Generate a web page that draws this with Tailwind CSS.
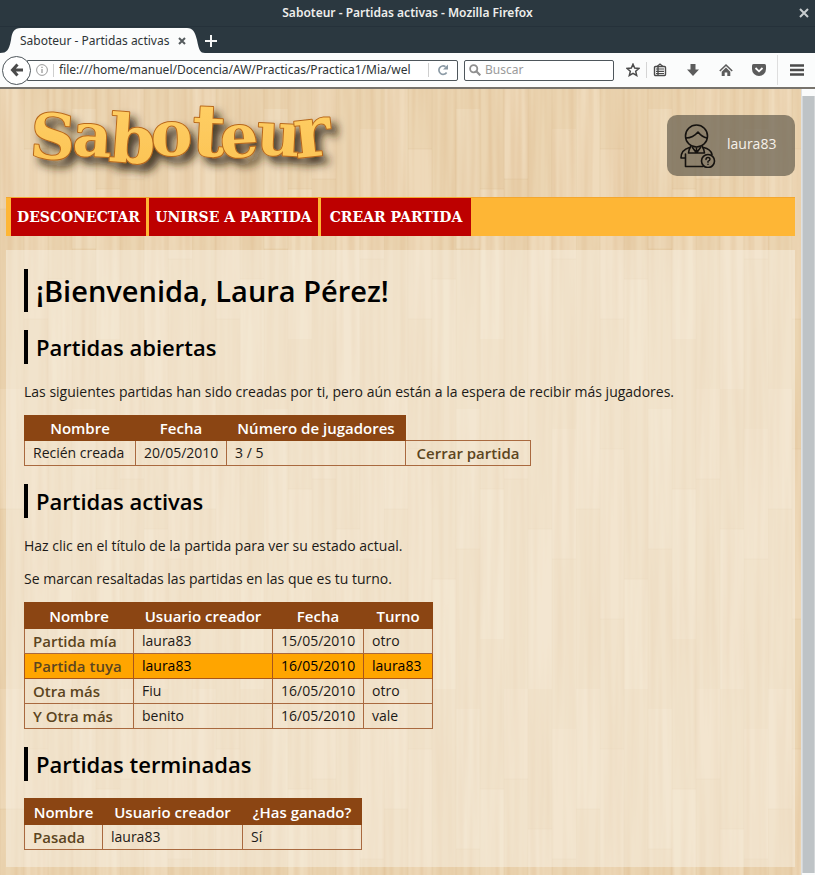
<!DOCTYPE html>
<html lang="es">
<head>
<meta charset="utf-8">
<title>Saboteur - Partidas activas</title>
<script src="https://cdn.jsdelivr.net/npm/@tailwindcss/browser@4"></script>
</head>
<body class="flex min-h-screen flex-col bg-[#fbfcfc] font-['Open_Sans',sans-serif] text-[14px] leading-[22px] text-[#1c1a17]">

<!-- Browser window -->
<div class="font-['Noto_Sans',sans-serif] text-[12px] leading-5 text-[#2e3436]">
  <div class="flex h-[26px] items-center bg-[#2b3840] px-[3px] text-[#eeeeec]">
    <span class="w-4"></span>
    <span class="flex-1 text-center font-semibold">Saboteur - Partidas activas - Mozilla Firefox</span>
    <button type="button" aria-label="Cerrar ventana" class="flex w-4 justify-center">
      <svg class="size-[10px]" viewBox="0 0 10 10" fill="none" stroke="#c9cdcf" stroke-width="2"><path d="M1 1l8 8M9 1l-8 8"/></svg>
    </button>
  </div>
  <div class="flex h-[27px] items-end border-t border-[#25313a] bg-[#2b3840]">
    <div class="relative flex h-[25px] w-[205px] items-center">
      <svg class="absolute inset-0 size-full" viewBox="0 0 205 25" preserveAspectRatio="none"><path d="M0 25C7 25 9 22 11 12C12 4 14 0 21 0H187C193 0 195 4 197 12C199 22 200 25 205 25Z" fill="#fbfcfc"/></svg>
      <span class="relative ml-5 w-[150px] whitespace-nowrap">Saboteur - Partidas activas</span>
      <button type="button" aria-label="Cerrar pestaña" class="relative ml-2">
        <svg class="size-[8px]" viewBox="0 0 8 8" fill="none" stroke="#555b5e" stroke-width="2"><path d="M1 1l6 6M7 1l-6 6"/></svg>
      </button>
    </div>
    <button type="button" aria-label="Nueva pestaña" class="mb-[6px]">
      <svg class="size-[12px]" viewBox="0 0 12 12" fill="none" stroke="#f4f5f5" stroke-width="2"><path d="M6 0v12M0 6h12"/></svg>
    </button>
  </div>
  <div class="flex h-[36px] items-center border-b-2 border-[#77736c] bg-[#fbfcfc] pr-[11px] pl-[2px]">
    <button type="button" aria-label="Atrás" class="relative z-10 flex size-[29px] shrink-0 items-center justify-center rounded-full border border-[#4e565b] bg-white">
      <svg class="size-[14px]" viewBox="0 0 14 14" fill="none" stroke="#4b4b4b" stroke-width="3"><path d="M7.500 1.500L2.500 7l5 5.500M2.500 7H13"/></svg>
    </button>
    <div class="-ml-1 flex h-[21px] flex-1 items-center rounded-r-[2px] border border-[#4e565b] bg-white pl-2">
      <svg class="size-[12px] shrink-0" viewBox="0 0 12 12" fill="none" stroke="#9a9a9a"><circle cx="6" cy="6" r="5.400"/><path d="M6 5v4M6 2.700v1.300" stroke-width="1.300"/></svg>
      <span class="ml-[5px] h-[13px] w-px bg-[#cfcfcf]"></span>
      <input aria-label="Dirección" class="ml-[5px] min-w-0 flex-1 outline-none" value="file:///home/manuel/Docencia/AW/Practicas/Practica1/Mia/wel">
      <span class="h-[14px] w-px bg-[#cfcfcf]"></span>
      <button type="button" aria-label="Recargar" class="mx-2">
        <svg class="size-[12px]" viewBox="0 0 12 12"><path d="M9.600 8.500A4.200 4.200 0 1 1 8.500 2.700" fill="none" stroke="#8b9aa5" stroke-width="1.700"/><path d="M11 .5v5H6z" fill="#8b9aa5"/></svg>
      </button>
    </div>
    <label class="ml-[6px] flex h-[21px] w-[150px] items-center rounded-[2px] border border-[#4e565b] bg-white pl-1">
      <svg class="size-[12px] shrink-0" viewBox="0 0 12 12" fill="none" stroke="#8f8f8f" stroke-width="1.800"><circle cx="4.700" cy="4.700" r="3.600"/><path d="M7.300 7.300l4 4" stroke-width="2.200"/></svg>
      <input aria-label="Buscar" placeholder="Buscar" class="ml-1 w-full min-w-0 outline-none placeholder:text-[#9b9b9b]">
    </label>
    <div class="ml-3 flex items-center text-[#4b4b4b]">
      <button type="button" aria-label="Marcador"><svg class="size-[14px]" viewBox="0 0 14 14" fill="none" stroke="currentColor" stroke-width="1.500"><path d="M7 1.200l1.700 3.900 4.200.4-3.200 2.800 1 4.200L7 10.300l-3.700 2.200 1-4.200L1.100 5.500l4.200-.4z"/></svg></button>
      <span class="mx-[6px] h-[16px] w-px bg-[#d5d5d5]"></span>
      <button type="button" aria-label="Biblioteca"><svg class="size-[14px]" viewBox="0 0 14 14" fill="none" stroke="currentColor" stroke-width="1.400"><rect x="1.500" y="3.500" width="11" height="9" rx="1"/><path d="M4 3.500L7 1l3 2.500M3 6h8M3 8.300h8M3 10.500h8" stroke-width="1.200"/><path d="M5 3.500v8.500"/></svg></button>
      <button type="button" aria-label="Descargas" class="ml-[19px]"><svg class="size-[14px]" viewBox="0 0 14 14" fill="#5c5c5c"><path d="M4.500 1h5v5.500H13L7 13 1 6.500h3.500z"/></svg></button>
      <button type="button" aria-label="Inicio" class="ml-[19px]"><svg class="size-[14px]" viewBox="0 0 14 14"><path d="M.8 8L7 2l6.200 6" fill="none" stroke="#5c5c5c" stroke-width="1.600"/><path d="M7 4.500L11.300 8.800V13H8.300V9.500H5.700V13H2.700V8.800z" fill="#5c5c5c"/></svg></button>
      <button type="button" aria-label="Pocket" class="ml-[19px]"><svg class="size-[14px]" viewBox="0 0 14 14"><path d="M1.500 1h11q1.500 0 1.500 1.500V6A7 7 0 0 1 0 6V2.500Q0 1 1.500 1z" fill="#5c5c5c"/><path d="M3.500 5L7 8.300 10.500 5" fill="none" stroke="#fff" stroke-width="1.800"/></svg></button>
      <span class="ml-[11px] h-[30px] w-px bg-[#dedede]"></span>
      <button type="button" aria-label="Menú" class="ml-[12px]"><svg class="size-[14px]" viewBox="0 0 14 14" fill="none" stroke="currentColor" stroke-width="2.400"><path d="M0 2.500h14M0 7h14M0 11.500h14"/></svg></button>
    </div>
  </div>
</div>

<div class="flex flex-1">
  <!-- Page -->
  <div class="relative flex-1 overflow-hidden bg-[#e9d1ae] px-[6px] pb-[7px]">
    <svg class="absolute inset-0 size-full" aria-hidden="true">
      <defs>
        <filter id="grain" x="0" y="0" width="100%" height="100%" color-interpolation-filters="sRGB">
          <feTurbulence type="fractalNoise" baseFrequency="0.16 0.005" numOctaves="2" seed="8"/>
          <feColorMatrix values="0 0 0 0 0.85  0 0 0 0 0.69  0 0 0 0 0.5  0.700 0 0 0 -0.240"/>
        </filter>
        <pattern id="planks" width="192" height="300" patternUnits="userSpaceOnUse">
          <g fill="#fff6e4">
            <rect x="0" y="0" width="24" height="120" opacity=".2"/><rect x="24" y="60" width="24" height="170" opacity=".16"/>
            <rect x="48" y="190" width="24" height="110" opacity=".22"/><rect x="72" y="20" width="24" height="140" opacity=".18"/>
            <rect x="96" y="100" width="24" height="150" opacity=".22"/><rect x="120" y="0" width="24" height="90" opacity=".16"/>
            <rect x="144" y="140" width="24" height="160" opacity=".2"/><rect x="168" y="40" width="24" height="130" opacity=".16"/>
            <rect width="192" height="300" opacity=".08"/>
          </g>
          <path d="M0 0v300M24 0v300M48 0v300M72 0v300M96 0v300M120 0v300M144 0v300M168 0v300M0 120h24M24 60h24M24 230h24M48 190h24M72 160h24M96 100h24M120 90h24M144 140h24M168 170h24" stroke="#d2b184" stroke-opacity=".2" fill="none"/>
        </pattern>
      </defs>
      <rect width="100%" height="100%" fill="url(#planks)"/>
      <rect width="100%" height="100%" filter="url(#grain)"/>
    </svg>

    <div class="relative">
      <header class="flex h-[108px] items-start justify-between">
        <svg class="ml-5 h-[96px] w-[330px]" viewBox="26 89 330 96" role="img" aria-label="Saboteur">
          <defs>
            <linearGradient id="gold" x1="0" y1="0" x2="0" y2="1"><stop offset="0" stop-color="#ffd168"/><stop offset="1" stop-color="#fbc252"/></linearGradient>
            <filter id="shadow" x="-10%" y="-20%" width="125%" height="160%"><feDropShadow dx="6" dy="7" stdDeviation="4" flood-color="#2a1c0a" flood-opacity=".85"/></filter>
          </defs>
          <g filter="url(#shadow)" font-family="'DejaVu Serif', serif" font-weight="bold" fill="url(#gold)" stroke="#b8681b" stroke-width="2" stroke-linejoin="round" paint-order="stroke">
            <text><tspan x="29" y="157" font-size="62" rotate="4">S</tspan><tspan x="72" y="155" font-size="60" rotate="3">a</tspan><tspan x="108" y="161" font-size="66" rotate="4">b</tspan><tspan x="151" y="155" font-size="62">o</tspan><tspan x="191" y="155" font-size="72" rotate="3">t</tspan><tspan x="221" y="158" font-size="60" rotate="-3">e</tspan><tspan x="256" y="154" font-size="60" rotate="3">u</tspan><tspan x="296" y="158" font-size="70" rotate="-6">r</tspan></text>
          </g>
        </svg>
        <div class="mt-[26px] flex h-[61px] w-[128px] items-center rounded-[10px] bg-[#5b5447]/65 pl-[13px] text-[#f6f1ea]">
          <svg class="h-[44px] w-[36px]" viewBox="0 0 36 44" fill="none" stroke="#15120f" stroke-width="1.600" stroke-linecap="round" stroke-linejoin="round">
            <circle cx="16.500" cy="12" r="11"/><path d="M6 14q7 0 12-6 4 5 9 6"/>
            <path d="M11 22q-2 3-2.500 7h16q-.5-4-2.500-7M12.500 23.500l4 5.500 4-5.500M16.500 24v5"/>
            <path d="M9.500 23.500C4 25 1 28 1 34h4.500M23.500 23.500c5 1 7.500 3 8.500 7M5.500 30v12.500H23"/>
            <circle cx="28" cy="37" r="6.500"/>
            <path d="M26 35.500q0-2 2-2t2 1.800q0 1.200-2 2v1M28 40.300v.1" stroke-width="1.400"/>
          </svg>
          <span class="ml-[11px] pb-1">laura83</span>
        </div>
      </header>

      <nav class="flex h-[39px] gap-[3px] border-t border-[#f3a72f] bg-[#feb635] pl-[5px] font-['DejaVu_Serif',serif] font-bold text-white">
        <a href="#" class="flex w-[135px] items-center justify-center whitespace-nowrap bg-[#bd0000]">DESCONECTAR</a>
        <a href="#" class="flex w-[169px] items-center justify-center whitespace-nowrap bg-[#bd0000]">UNIRSE A PARTIDA</a>
        <a href="#" class="flex w-[150px] items-center justify-center whitespace-nowrap bg-[#bd0000]">CREAR PARTIDA</a>
      </nav>

      <main class="mt-[14px] bg-[#f8f1e5]/50 px-[18px] pt-[19px] pb-[17px]">
        <h1 class="mb-[18px] border-l-4 border-black pl-2 text-[29px] leading-[43px] font-semibold text-black">¡Bienvenida, Laura Pérez!</h1>

        <section class="mb-[18px]">
          <h2 class="mb-[17px] border-l-4 border-black pl-2 text-[22px] leading-[34px] font-semibold text-black">Partidas abiertas</h2>
          <p class="mb-3">Las siguientes partidas han sido creadas por ti, pero aún están a la espera de recibir más jugadores.</p>
          <table class="border-collapse whitespace-nowrap">
            <tr class="h-[25px] text-[15px] text-white">
              <th class="w-[111px] border border-[#8b4513] bg-[#8b4513] font-semibold">Nombre</th>
              <th class="w-[91px] border border-[#8b4513] bg-[#8b4513] font-semibold">Fecha</th>
              <th class="w-[179px] border border-[#8b4513] bg-[#8b4513] font-semibold">Número de jugadores</th>
            </tr>
            <tr class="h-[25px]">
              <td class="border border-[#a9693f] pl-2">Recién creada</td>
              <td class="border border-[#a9693f] pl-2">20/05/2010</td>
              <td class="border border-[#a9693f] pl-2">3 / 5</td>
              <td class="w-[125px] border border-[#a9693f] text-center text-[15px]"><a href="#" class="font-semibold text-[#5c4520]">Cerrar partida</a></td>
            </tr>
          </table>
        </section>

        <section class="mb-[18px]">
          <h2 class="mb-[17px] border-l-4 border-black pl-2 text-[22px] leading-[34px] font-semibold text-black">Partidas activas</h2>
          <p class="mb-[11px]">Haz clic en el título de la partida para ver su estado actual.</p>
          <p class="mb-3">Se marcan resaltadas las partidas en las que es tu turno.</p>
          <table class="border-collapse whitespace-nowrap">
            <tr class="h-[26px] text-[15px] text-white">
              <th class="w-[109px] border border-[#8b4513] bg-[#8b4513] font-semibold">Nombre</th>
              <th class="w-[139px] border border-[#8b4513] bg-[#8b4513] font-semibold">Usuario creador</th>
              <th class="w-[91px] border border-[#8b4513] bg-[#8b4513] font-semibold">Fecha</th>
              <th class="w-[69px] border border-[#8b4513] bg-[#8b4513] font-semibold">Turno</th>
            </tr>
            <tr class="h-[25px]">
              <td class="border border-[#a9693f] pl-2 text-[15px]"><a href="#" class="font-semibold text-[#5c4520]">Partida mía</a></td>
              <td class="border border-[#a9693f] pl-2">laura83</td><td class="border border-[#a9693f] pl-2">15/05/2010</td><td class="border border-[#a9693f] pl-2">otro</td>
            </tr>
            <tr class="h-[25px] bg-[#ffa500] text-black">
              <td class="border border-[#a9551a] pl-2 text-[15px]"><a href="#" class="font-semibold text-[#5c4520]">Partida tuya</a></td>
              <td class="border border-[#a9551a] pl-2">laura83</td><td class="border border-[#a9551a] pl-2">16/05/2010</td><td class="border border-[#a9551a] pl-2">laura83</td>
            </tr>
            <tr class="h-[25px]">
              <td class="border border-[#a9693f] pl-2 text-[15px]"><a href="#" class="font-semibold text-[#5c4520]">Otra más</a></td>
              <td class="border border-[#a9693f] pl-2">Fiu</td><td class="border border-[#a9693f] pl-2">16/05/2010</td><td class="border border-[#a9693f] pl-2">otro</td>
            </tr>
            <tr class="h-[25px]">
              <td class="border border-[#a9693f] pl-2 text-[15px]"><a href="#" class="font-semibold text-[#5c4520]">Y Otra más</a></td>
              <td class="border border-[#a9693f] pl-2">benito</td><td class="border border-[#a9693f] pl-2">16/05/2010</td><td class="border border-[#a9693f] pl-2">vale</td>
            </tr>
          </table>
        </section>

        <section>
          <h2 class="mb-[17px] border-l-4 border-black pl-2 text-[22px] leading-[34px] font-semibold text-black">Partidas terminadas</h2>
          <table class="border-collapse whitespace-nowrap">
            <tr class="h-[26px] text-[15px] text-white">
              <th class="w-[78px] border border-[#8b4513] bg-[#8b4513] font-semibold">Nombre</th>
              <th class="w-[140px] border border-[#8b4513] bg-[#8b4513] font-semibold">Usuario creador</th>
              <th class="w-[119px] border border-[#8b4513] bg-[#8b4513] font-semibold">¿Has ganado?</th>
            </tr>
            <tr class="h-[25px]">
              <td class="border border-[#a9693f] pl-2 text-[15px]"><a href="#" class="font-semibold text-[#5c4520]">Pasada</a></td>
              <td class="border border-[#a9693f] pl-2">laura83</td><td class="border border-[#a9693f] pl-2">Sí</td>
            </tr>
          </table>
        </section>
      </main>
    </div>
  </div>

  <!-- Scrollbar -->
  <div class="flex w-[14px] flex-col border-l border-[#dfe1e2] bg-[#fafbfb] pt-[7px] pb-[2px]">
    <div class="flex-1 border-x border-[#d3d6d8] bg-[#bec3c6]"></div>
  </div>
</div>
</body>
</html>
